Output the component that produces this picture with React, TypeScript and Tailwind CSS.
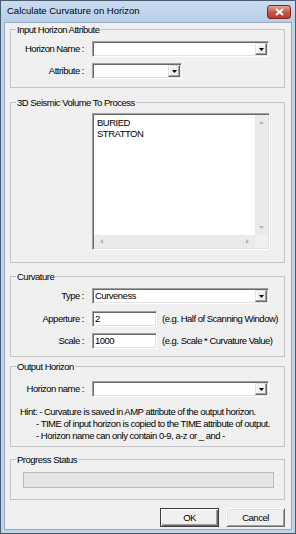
const ui = "font-['Liberation_Sans',Arial,sans-serif] text-[9.5px] tracking-[-0.5px] text-black";

const sunken =
  "border border-t-[#a0a0a0] border-l-[#a0a0a0] border-r-white border-b-white shadow-[inset_1px_1px_0_#696969,inset_-1px_-1px_0_#e3e3e3]";

const DropArrow = () => (
  <div className="ml-auto mr-[1px] mt-[1px] flex h-[12px] w-[12px] items-center justify-center border border-t-[#e3e3e3] border-l-[#e3e3e3] border-r-[#696969] border-b-[#696969] bg-[#f0f0f0] shadow-[inset_-1px_-1px_0_#a0a0a0,inset_1px_1px_0_#fff]">
    <svg width="5" height="3" viewBox="0 0 5 3">
      <path d="M0 0h5L2.5 3z" fill="#000" />
    </svg>
  </div>
);

const Combo = ({ className, value }: { className: string; value?: string }) => (
  <div className={`flex h-[16px] bg-white ${sunken} ${className}`}>
    {value && <span className="pl-[2px] leading-[14px]">{value}</span>}
    <DropArrow />
  </div>
);

const TextBox = ({ className, value }: { className: string; value: string }) => (
  <div className={`h-[16px] bg-white pl-[2px] leading-[14px] ${sunken} ${className}`}>{value}</div>
);

const Group = ({
  title,
  className,
  children,
}: {
  title: string;
  className: string;
  children: React.ReactNode;
}) => (
  <fieldset className={`border border-[#c4c4c4] px-0 ${className}`}>
    <legend className="ml-[5px] px-[1px] leading-[13px]">{title}</legend>
    {children}
  </fieldset>
);

const Label = ({ children }: { children: React.ReactNode }) => (
  <div className="w-[77px] shrink-0 pr-[4px] text-right leading-[16px]">{children}</div>
);

const Tri = ({ d }: { d: string }) => (
  <svg width="5" height="5" viewBox="0 0 5 5">
    <path d={d} fill="#b4b4b4" />
  </svg>
);

const ListBox = () => (
  <div className={`ml-[81px] mt-[4px] flex h-[137px] w-[178px] flex-col bg-white ${sunken} p-[1px]`}>
    <div className="flex min-h-0 flex-1">
      <div className="flex-1 pl-[3px] pt-[2px] leading-[11px]">
        <div>BURIED</div>
        <div>STRATTON</div>
      </div>
      <div className="flex w-[13px] flex-col items-center justify-between bg-[#eaeaea] py-[5px]">
        <Tri d="M0 4L2.5 1L5 4z" />
        <Tri d="M0 1L2.5 4L5 1z" />
      </div>
    </div>
    <div className="flex h-[13px]">
      <div className="flex flex-1 items-center justify-between bg-[#eaeaea] px-[5px]">
        <Tri d="M4 0L1 2.5L4 5z" />
        <Tri d="M1 0L4 2.5L1 5z" />
      </div>
      <div className="w-[13px] bg-[#f0f0f0]" />
    </div>
  </div>
);

const Button = ({ children, primary }: { children: React.ReactNode; primary?: boolean }) => (
  <div
    className={`flex h-[19px] w-[59px] items-center justify-center bg-[#f0f0f0] leading-none border ${
      primary
        ? "border-[#3c3c3c] shadow-[inset_1px_1px_0_#fff,inset_-1px_-1px_0_#696969,inset_-2px_-2px_0_#a0a0a0]"
        : "border-t-white border-l-white border-r-[#696969] border-b-[#696969] shadow-[inset_1px_1px_0_#e3e3e3,inset_-1px_-1px_0_#a0a0a0]"
    }`}
  >
    {children}
  </div>
);

export default function App() {
  return (
    <div className={`flex h-[534px] w-[296px] flex-col border border-[#4a5c72] bg-[#bfd4eb] ${ui}`}>
      <div className="flex h-[21px] shrink-0 items-center bg-gradient-to-b from-[#cadcf0] to-[#b8cfe8] pl-[6px] pr-[4px]">
        <span className="text-[9.5px] tracking-normal text-black">Calculate Curvature on Horizon</span>
        <div className="ml-auto flex h-[14px] w-[24px] items-center justify-center rounded-[3px] border border-[#7a2a20] bg-gradient-to-b from-[#e3a194] via-[#c9584a] to-[#b83c2c]">
          <svg width="9" height="8" viewBox="0 0 9 8">
            <path d="M1 1l7 6M8 1L1 7" stroke="#fff" strokeWidth="2" />
          </svg>
        </div>
      </div>

      <div className="mx-[3px] mb-[3px] flex flex-1 flex-col border border-[#97adc6] bg-[#f0f0f0] pl-[5px] pr-[6px]">
        <Group title="Input Horizon Attribute" className="h-[65px]">
          <div className="mt-[5px] flex items-center">
            <Label>Horizon Name :</Label>
            <Combo className="ml-[4px] w-[177px]" />
          </div>
          <div className="mt-[6px] flex items-center">
            <Label>Attribute :</Label>
            <Combo className="ml-[4px] w-[90px]" />
          </div>
        </Group>

        <Group title="3D Seismic Volume To Process" className="mt-[8px] h-[167px]">
          <ListBox />
        </Group>

        <Group title="Curvature" className="mt-[7px] h-[87px]">
          <div className="mt-[5px] flex items-center">
            <Label>Type :</Label>
            <Combo className="ml-[4px] w-[177px]" value="Curveness" />
          </div>
          <div className="mt-[7px] flex items-center">
            <Label>Apperture :</Label>
            <TextBox className="ml-[4px] w-[65px]" value="2" />
            <span className="ml-[5px] whitespace-nowrap">(e.g. Half of Scanning Window)</span>
          </div>
          <div className="mt-[6px] flex items-center">
            <Label>Scale :</Label>
            <TextBox className="ml-[4px] w-[65px]" value="1000" />
            <span className="ml-[5px] whitespace-nowrap">(e.g. Scale * Curvature Value)</span>
          </div>
        </Group>

        <Group title="Output Horizon" className="mt-[3px] h-[87px]">
          <div className="mt-[8px] flex items-center">
            <Label>Horizon name :</Label>
            <Combo className="ml-[4px] w-[177px]" />
          </div>
          <div className="mt-[9px] whitespace-nowrap pl-[9px] leading-[12px]">
            <div>Hint: - Curvature is saved in AMP attribute of the output horizon.</div>
            <div className="pl-[16px]">- TIME of input horizon is copied to the TIME attribute of output.</div>
            <div className="pl-[16px]">- Horizon name can only contain 0-9, a-z or _ and -</div>
          </div>
        </Group>

        <Group title="Progress Status" className="mt-[6px] h-[47px]">
          <div className="ml-[12px] mt-[6px] h-[16px] w-[251px] border border-[#bcbcbc] bg-[#e6e6e6]" />
        </Group>

        <div className="mt-[8px] flex justify-end gap-[7px]">
          <Button primary>OK</Button>
          <Button>Cancel</Button>
        </div>
      </div>
    </div>
  );
}
